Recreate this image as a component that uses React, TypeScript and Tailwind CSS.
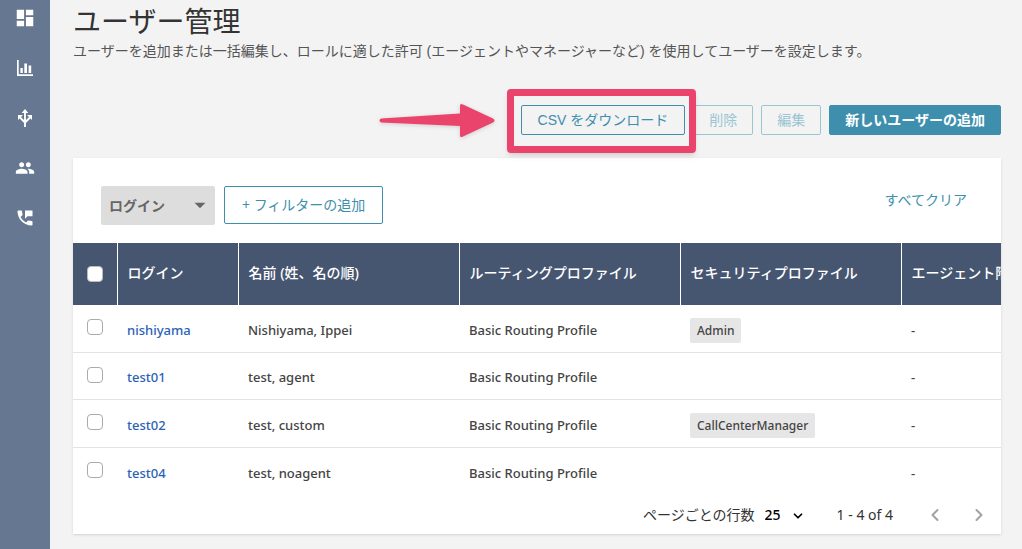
import React from 'react';
import { MdArrowDropDown, MdDashboard, MdPeople, MdPermPhoneMsg } from 'react-icons/md';
import { ChevronDown, ChevronLeft, ChevronRight } from 'lucide-react';

const users = [
  { login: 'nishiyama', name: 'Nishiyama, Ippei', routing: 'Basic Routing Profile', security: 'Admin' },
  { login: 'test01', name: 'test, agent', routing: 'Basic Routing Profile', security: '' },
  { login: 'test02', name: 'test, custom', routing: 'Basic Routing Profile', security: 'CallCenterManager' },
  { login: 'test04', name: 'test, noagent', routing: 'Basic Routing Profile', security: '' },
];

const columns = ['ログイン', '名前 (姓、名の順)', 'ルーティングプロファイル', 'セキュリティプロファイル', 'エージェント階層'];

const ChartIcon = () => (
  <svg viewBox="0 0 16 16" className="w-4 h-4" fill="currentColor" aria-hidden="true">
    <path d="M0 0h1.7v14.2H16V16H0zM3.4 8h2.4v5H3.4zM7.3 3.6h2.7v9.4H7.3zM11.6 5.6h2.6v7.4h-2.6z" />
  </svg>
);

const RoutingIcon = () => (
  <svg viewBox="0 0 16 18" className="w-4 h-[18px]" aria-hidden="true">
    <path d="M8 18V3M8 13.5L3 8.5M8 13.5L13 8.5" fill="none" stroke="currentColor" strokeWidth="1.9" />
    <path d="M8 0l3.3 4H4.7zM1 6h5L1 11zM15 6v5L10 6z" fill="currentColor" />
  </svg>
);

const Sidebar = () => (
  <nav className="w-[50px] shrink-0 bg-[#667791] text-white">
    <ul>
      {[
        { label: 'ダッシュボード', icon: <MdDashboard className="w-[22px] h-[22px]" /> },
        { label: '分析', icon: <ChartIcon /> },
        { label: 'ルーティング', icon: <RoutingIcon /> },
        { label: 'ユーザー', icon: <MdPeople className="w-5 h-5" /> },
        { label: 'チャネル', icon: <MdPermPhoneMsg className="w-5 h-5" /> },
      ].map((item, index) => (
        <li key={item.label} className={index === 0 ? 'h-[43px]' : 'h-[50px]'}>
          <a
            href="#"
            aria-label={item.label}
            className={index === 0 ? 'flex h-9 items-center justify-center' : 'flex h-[50px] items-center justify-center'}
          >
            {item.icon}
          </a>
        </li>
      ))}
    </ul>
  </nav>
);

// Frame and arrow that point out the download button
const Highlight = () => (
  <span className="pointer-events-none" aria-hidden="true">
    <span className="absolute -top-4 -bottom-[18px] -left-3.5 -right-[11px] z-10 rounded border-7 border-[#eb446c] shadow-md" />
    <svg viewBox="0 0 118 36" className="absolute right-full mr-[25px] -top-0.5 w-[118px] h-9 drop-shadow-sm">
      <path
        d="M3 15.5L82 10.5V2.5Q82 0 85 1.5L115 15.5Q118 17.5 115 19.5L85 33.5Q82 35 82 32.5V23L3 19.5Q0 17.5 3 15.5Z"
        fill="#eb446c"
      />
    </svg>
  </span>
);

const App = () => {
  return (
    <div className="flex min-h-screen bg-[#f3f3f3] font-['Noto_Sans','Noto_Sans_CJK_JP',sans-serif] text-sm text-[#444]">
      <Sidebar />
      <main className="flex-1 min-w-0 pl-[23px] pr-[21px] pb-4">
        <h1 className="pt-0.5 text-[28px] leading-9 text-[#333] font-['Noto_Sans_CJK_JP',sans-serif]">ユーザー管理</h1>
        <p className="mt-[3px] leading-5 text-[#555] font-['Liberation_Sans','Noto_Sans_CJK_JP',sans-serif]">
          ユーザーを追加または一括編集し、ロールに適した許可 (エージェントやマネージャーなど) を使用してユーザーを設定します。
        </p>

        <div className="mt-11 flex justify-end gap-2 font-['Liberation_Sans','Noto_Sans_CJK_JP',sans-serif]">
          <div className="relative">
            <button className="h-[30px] px-4 rounded-xs border border-[#3e8fae] text-[#3e8fae]">
              CSV をダウンロード
            </button>
            <Highlight />
          </div>
          <button disabled className="h-[30px] px-[15px] rounded-xs border border-[#9bc4d4] text-[#9bc4d4]">
            削除
          </button>
          <button disabled className="h-[30px] px-[15px] rounded-xs border border-[#9bc4d4] text-[#9bc4d4]">
            編集
          </button>
          <button className="h-[30px] px-[15px] rounded-xs border border-[#3e8fae] bg-[#3e8fae] font-bold text-white">
            新しいユーザーの追加
          </button>
        </div>

        <section className="mt-[23px] bg-white shadow">
          <div className="flex items-start gap-[9px] px-7 pt-7 pb-[18px]">
            <div className="relative">
              <select
                aria-label="フィルター"
                className="h-[39px] w-[114px] appearance-none rounded-xs bg-[#ddd] pl-2 font-bold text-[#666]"
              >
                <option>ログイン</option>
              </select>
              <MdArrowDropDown className="pointer-events-none absolute right-0.5 top-1.5 w-[26px] h-[26px] text-[#666]" />
            </div>
            <button className="h-[38px] px-[17px] rounded-xs border border-[#3e8fae] text-[#3e8fae]">
              + フィルターの追加
            </button>
            <a href="#" className="ml-auto mr-1.5 mt-1 leading-5 text-[#3e8fae]">
              すべてクリア
            </a>
          </div>

          <div className="overflow-hidden">
            <table className="w-[1050px] table-fixed text-left">
              <colgroup>
                <col className="w-11" />
                <col className="w-[121px]" />
                <col className="w-[221px]" />
                <col className="w-[221px]" />
                <col className="w-[221px]" />
                <col />
              </colgroup>
              <thead className="bg-[#465671] text-white">
                <tr className="h-[62px]">
                  <th>
                    <input
                      type="checkbox"
                      aria-label="すべて選択"
                      className="mx-auto block w-4 h-4 appearance-none rounded border border-[#bbb] bg-white"
                    />
                  </th>
                  {columns.map((column) => (
                    <th key={column} className="border-l border-white px-2.5 pb-0.5 font-medium whitespace-nowrap">
                      {column}
                    </th>
                  ))}
                </tr>
              </thead>
              <tbody className="text-[13px] font-medium">
                {users.map((user) => (
                  <tr
                    key={user.login}
                    className="h-[47px] border-b border-[#e3e3e3] nth-[n+3]:h-12 last:border-b-0"
                  >
                    <td>
                      <input
                        type="checkbox"
                        aria-label={user.login}
                        className="mx-auto mb-0.5 block w-4 h-4 appearance-none rounded border border-[#aaa] bg-white"
                      />
                    </td>
                    <td className="px-2.5 pt-1">
                      <a href="#" className="text-[#2b62b8]">
                        {user.login}
                      </a>
                    </td>
                    <td className="px-2.5 pt-1">{user.name}</td>
                    <td className="px-2.5 pt-1">{user.routing}</td>
                    <td className="px-2.5 pt-1">
                      {user.security && (
                        <span className="inline-block h-[25px] rounded-xs bg-[#e6e6e6] px-[7px] text-xs leading-[25px]">
                          {user.security}
                        </span>
                      )}
                    </td>
                    <td className="px-2.5 pt-1">-</td>
                  </tr>
                ))}
              </tbody>
            </table>
          </div>

          <div className="flex h-[39px] items-center justify-end pr-3 text-[#333]">
            <label htmlFor="rows">ページごとの行数</label>
            <div className="relative ml-2.5 mr-8">
              <select id="rows" className="w-10 appearance-none bg-transparent font-medium text-black">
                <option>25</option>
              </select>
              <ChevronDown className="pointer-events-none absolute right-0 top-1 w-3.5 h-3.5 text-black" strokeWidth={3} />
            </div>
            <span>1 - 4 of 4</span>
            <button aria-label="前のページ" className="ml-8">
              <ChevronLeft className="w-5 h-5 text-[#a3a3a3]" strokeWidth={2.5} />
            </button>
            <button aria-label="次のページ" className="ml-6">
              <ChevronRight className="w-5 h-5 text-[#a3a3a3]" strokeWidth={2.5} />
            </button>
          </div>
        </section>
      </main>
    </div>
  );
};

export default App;
